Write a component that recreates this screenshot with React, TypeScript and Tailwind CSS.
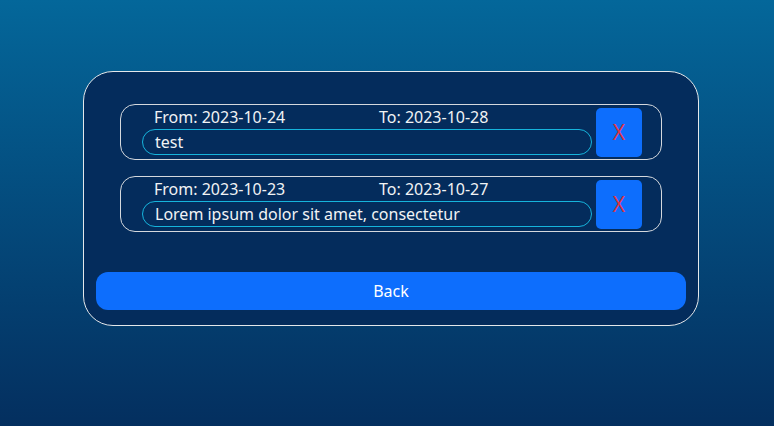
import React from 'react';

type Note = {
  from: string;
  to: string;
  text: string;
};

const notes: Note[] = [
  { from: '2023-10-24', to: '2023-10-28', text: 'test' },
  { from: '2023-10-23', to: '2023-10-27', text: 'Lorem ipsum dolor sit amet, consectetur' },
];

function NoteRow({ note }: { note: Note }) {
  return (
    <div className="flex items-start h-[56px] rounded-[15px] border border-[#d4d8dd] pl-[21px] pr-[19px]">
      <div className="flex-1 flex flex-col">
        <div className="grid grid-cols-2 leading-[24px]">
          <span className="pl-3">From: {note.from}</span>
          <span className="pl-3">To: {note.to}</span>
        </div>
        <div className="h-[26px] rounded-full border border-[#16b4dc] px-3 flex items-center leading-[24px]">
          {note.text}
        </div>
      </div>
      <button className="ml-[4px] mt-[3px] w-[46px] h-[49px] rounded-[5px] bg-[#0d6efd] text-[#dc3545] text-[21px] flex items-center justify-center">
        X
      </button>
    </div>
  );
}

export default function App() {
  return (
    <div
      className="min-h-screen w-full bg-gradient-to-b from-[#04679a] to-[#042f5f] text-[#f1f3f5] text-[16px] pt-[71px] pl-[83px]"
      style={{ fontFamily: '"Noto Sans", "Open Sans", sans-serif' }}
    >
      <div className="w-[616px] rounded-[30px] border border-[#e4e7ea] bg-[#042c5c] px-3 pt-[32px] pb-[15px]">
        <div className="mx-[24px] flex flex-col gap-[16px]">
          {notes.map((n, i) => (
            <NoteRow key={i} note={n} />
          ))}
        </div>
        <button className="mt-[40px] w-full h-[38px] rounded-[12px] bg-[#0d6efd] text-white text-[16px]">
          Back
        </button>
      </div>
    </div>
  );
}
